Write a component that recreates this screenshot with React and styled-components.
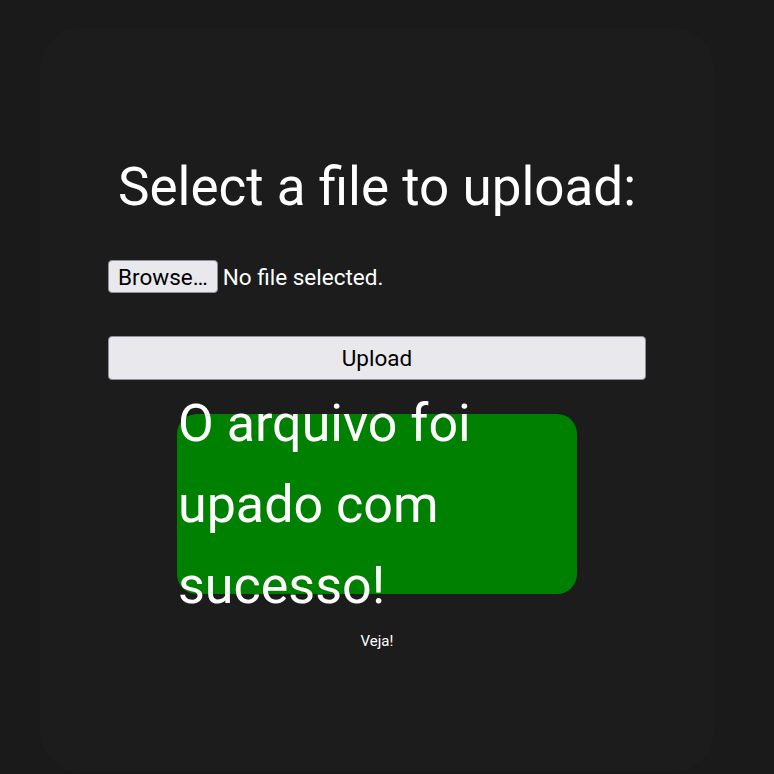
import React, { useRef, useState } from "react";
import styled, { createGlobalStyle } from "styled-components";

const App = () => {
  // hidden input, the visible button is our own (Firefox look)
  const fileRef = useRef(null);
  const [fileName, setFileName] = useState("");

  return (
    <>
      <GlobalStyle />
      <Card>
        <Title>Select a file to upload:</Title>

        <UploadForm onSubmit={(e) => e.preventDefault()}>
          <FileRow>
            <HiddenInput
              ref={fileRef}
              type="file"
              onChange={(e) => setFileName(e.target.files[0]?.name || "")}
            />
            <BrowseButton type="button" onClick={() => fileRef.current.click()}>
              Browse…
            </BrowseButton>
            <FileLabel>{fileName || "No file selected."}</FileLabel>
          </FileRow>

          <UploadButton type="submit">Upload</UploadButton>
        </UploadForm>

        <SuccessBox>
          <SuccessText>O arquivo foi upado com sucesso!</SuccessText>
        </SuccessBox>

        <SeeLink>Veja!</SeeLink>
      </Card>
    </>
  );
};
export default App;

////STYLES
const GlobalStyle = createGlobalStyle`
  html, body {
    margin: 0;
    padding: 0;
    background: #1a1a1a;
    font-family: Roboto, "Noto Sans", sans-serif;
  }
  * {
    box-sizing: border-box;
  }
`;

const Card = styled.main`
  margin: 28px 0 0 40px;
  width: 674px;
  height: 744px;
  border-radius: 40px;
  background: #1c1c1c;
  display: flex;
  flex-direction: column;
  align-items: center;
  padding-top: 127px;
  color: #ffffff;
`;

const Title = styled.h1`
  margin: 0;
  font-size: 53px;
  font-weight: 400;
  line-height: 64px;
  color: #ffffff;
`;

const UploadForm = styled.form`
  width: 538px;
  margin-top: 41px;
  display: flex;
  flex-direction: column;
`;

const FileRow = styled.div`
  display: flex;
  align-items: center;
  gap: 5px;
  height: 33px;
`;

const HiddenInput = styled.input`
  display: none;
`;

const BrowseButton = styled.button`
  height: 33px;
  padding: 0 9px;
  border: 1px solid #8f8f9d;
  border-radius: 4px;
  background: #e9e9ed;
  color: #000000;
  font-family: inherit;
  font-size: 22.5px;
  cursor: pointer;
`;

const FileLabel = styled.span`
  font-size: 22.5px;
  color: #ffffff;
`;

const UploadButton = styled.button`
  margin-top: 43px;
  width: 100%;
  height: 44px;
  border: 1px solid #8f8f9d;
  border-radius: 4px;
  background: #e9e9ed;
  color: #000000;
  font-family: inherit;
  font-size: 22.5px;
  cursor: pointer;
`;

const SuccessBox = styled.div`
  margin-top: 34px;
  width: 400px;
  height: 180px;
  border-radius: 20px;
  background: #008000;
  display: flex;
  align-items: center;
`;

const SuccessText = styled.p`
  margin: 0;
  padding-left: 1px;
  font-size: 52px;
  line-height: 81px;
  color: #ffffff;
`;

const SeeLink = styled.span`
  margin-top: 37px;
  font-size: 15px;
  line-height: 20px;
  color: #ffffff;
`;
